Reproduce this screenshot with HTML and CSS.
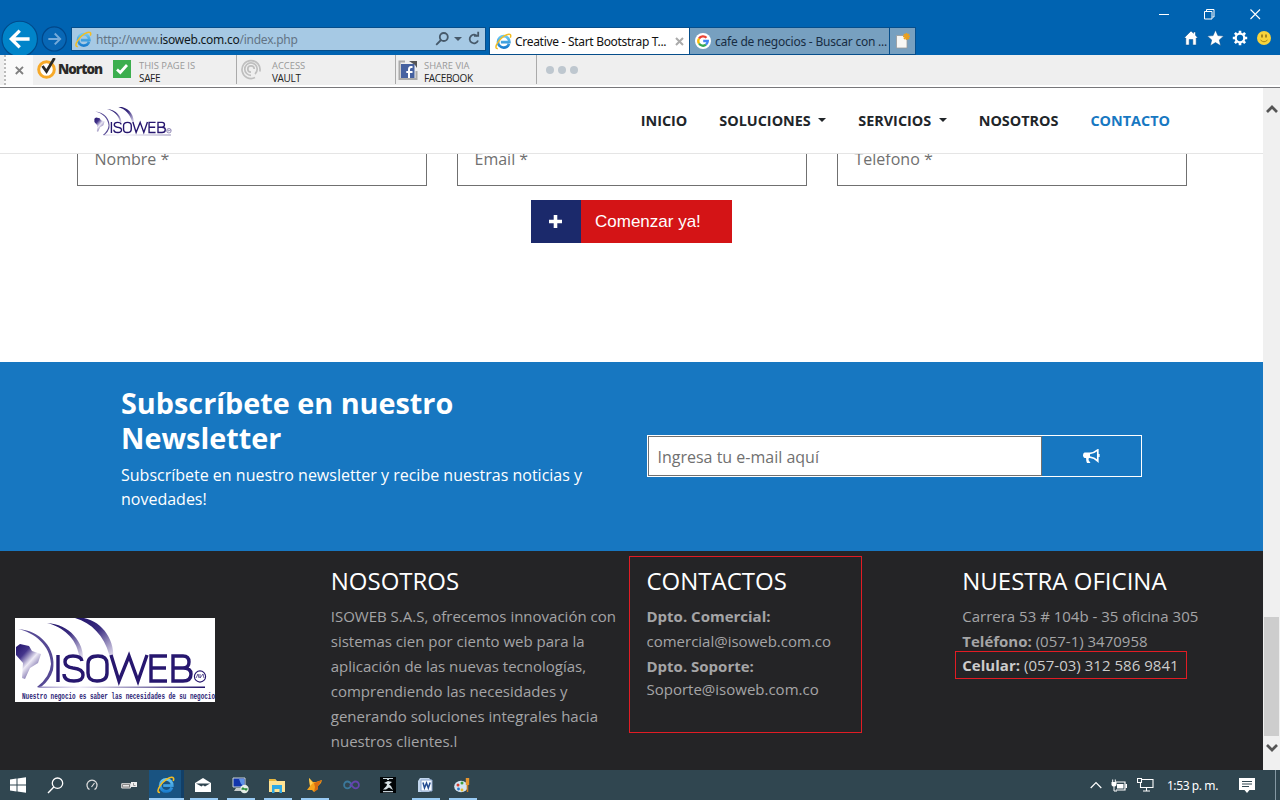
FILE: index.html
```html
<!DOCTYPE html>
<html lang="es">
<head>
<meta charset="utf-8">
<title>Creative - Start Bootstrap Theme</title>
<link rel="stylesheet" href="styles.css">
</head>
<body>
<svg width="0" height="0" class="defs" aria-hidden="true">
  <defs>
    <linearGradient id="ieblue" x1="0" y1="0" x2="0" y2="1"><stop offset="0" stop-color="#6cc8f2"/><stop offset="1" stop-color="#1b7fd0"/></linearGradient>
    <linearGradient id="arc" x1="0" y1="0" x2=".9" y2="1"><stop offset="0" stop-color="#201268"/><stop offset=".45" stop-color="#3a2c80"/><stop offset="1" stop-color="#eeeaf6"/></linearGradient>
    <linearGradient id="land" x1="0" y1="0" x2=".8" y2="1"><stop offset="0" stop-color="#20106a"/><stop offset=".32" stop-color="#44358b"/><stop offset=".58" stop-color="#eeebf6"/><stop offset="1" stop-color="#30207a"/></linearGradient>
    <linearGradient id="rule" x1="0" y1="0" x2="1" y2="0"><stop offset="0" stop-color="#9a92c4"/><stop offset=".25" stop-color="#f0edf8"/><stop offset="1" stop-color="#201268"/></linearGradient>
    <symbol id="ie" viewBox="0 0 18 18">
      <path d="M14.8 11.5C13.9 14 11.8 15.4 9.2 15.4A6 6 0 1 1 15.2 9.6H6.2" fill="none" stroke="url(#ieblue)" stroke-width="2.9"/>
      <path d="M3 16.3C.2 17 .4 13.6 3.2 9.6C6.8 4.3 13.2.2 15.8 1.5C17 2.1 16.7 3.8 16.2 5" fill="none" stroke="#f3bd23" stroke-width="1.6"/>
    </symbol>
    <symbol id="isoweb" viewBox="0 0 200 84">
      <path d="M3 11C24 12 42 30 38 52Q35 62 26 69H22Q35 59 36 46C35 27 20 15 3 11Z" fill="#564994"/>
      <path d="M32 5C54 6 70 24 68 44L64 37C61 20 48 9 32 5Z" fill="url(#arc)"/>
      <path d="M60 0H69C88 4 101 23 98 44L94 36C89 18 77 5 60 0Z" fill="url(#arc)"/>
      <path d="M1 29L5 26L14 28L17 33L26 36L23 45L15 50L10 61L7 60L8 45L1 37Z" fill="url(#land)"/>
      <path d="M25 68.5H190V70H22Z" fill="url(#rule)"/>
      <g fill="none" stroke="#27176f" stroke-width="3.4">
        <path d="M43 37V64M67 43Q66 38 58 38Q50 38 50 44Q50 49 58 50Q68 51 68 57Q68 63 59 63Q49 63 49 56M83 38Q73 38 73 46V55Q73 63 82 63Q92 63 92 55V46Q92 38 83 38ZM96 37L104 63L114 38L123 63L132 37M152 38H136V63H152M136 50H151M158 38V63H168Q176 63 176 56Q176 50 168 50Q174 50 174 44Q174 38 168 38ZM158 50H169"/>
        <circle cx="185" cy="58.5" r="5.6" stroke-width="1.1"/>
        <path d="M181 60L183 56L184 60M185 56V60L188 56L189 60" stroke-width=".7"/>
      </g>
    </symbol>
  </defs>
</svg>

<div class="titlebar">
  <div class="window-controls">
    <svg width="10" height="12" viewBox="0 0 10 12"><path d="M0 6.5H10" stroke="#fff"/></svg>
    <svg width="11" height="12" viewBox="0 0 11 12"><path d="M.5 3.5H8V11H.5ZM2.5 3V1.5H10V9H8.5" fill="none" stroke="#fff"/></svg>
    <svg width="11" height="12" viewBox="0 0 11 12"><path d="M.5 1.5L10 11M10 1.5L.5 11" stroke="#fff" stroke-width="1.1"/></svg>
  </div>
  <div class="browser-nav">
    <svg class="history" width="72" height="35" viewBox="0 0 72 35">
      <circle cx="20" cy="19" r="18" fill="#0084c9" stroke="#004b8b" stroke-width="1.2"/>
      <path d="M30 19H12M20 10.5L11.5 19L20 27.5" fill="none" stroke="#fff" stroke-width="3.4"/>
      <circle cx="55" cy="19" r="12.2" fill="#0867b5" stroke="#00478a" stroke-width="1.2"/>
      <path d="M49 19H61M55.5 13.5L61 19L55.5 24.5" fill="none" stroke="#75aada" stroke-width="2"/>
    </svg>
    <div class="address">
      <svg width="17" height="17"><use href="#ie"/></svg>
      <span class="url">http://www.<b>isoweb.com.co</b>/index.php</span>
      <svg class="address-tools" width="46" height="16" viewBox="0 0 46 16">
        <g fill="none" stroke="#46596a" stroke-width="1.8"><circle cx="8.8" cy="6" r="4"/><path d="M6 9L1.2 13.8"/><path d="M42.5 5.5A4.3 4.3 0 1 0 43 9.5M39 4.8H43.2V.8"/></g>
        <path d="M19 6H27L23 10Z" fill="#46596a"/>
      </svg>
    </div>
    <div class="tabs">
      <div class="tab active">
        <svg width="17" height="17"><use href="#ie"/></svg><span>Creative - Start Bootstrap T...</span>
        <svg class="close" width="9" height="9" viewBox="0 0 9 9"><path d="M1 1L8 8M8 1L1 8" stroke="#aaa" stroke-width="2"/></svg>
      </div>
      <div class="tab">
        <svg width="16" height="16" viewBox="0 0 16 16"><circle cx="8" cy="8" r="8" fill="#fff"/><g fill="none" stroke-width="2.3"><path d="M4 5.5A4.8 4.8 0 0 1 11.5 4.8" stroke="#ea4335"/><path d="M4 5.5A4.8 4.8 0 0 0 4 10.5" stroke="#fbbc05"/><path d="M4 10.5A4.8 4.8 0 0 0 11 11.7" stroke="#34a853"/><path d="M11 11.7Q12.8 10 12.8 8H8.2" stroke="#4285f4"/></g></svg>
        <span class="dim">cafe de negocios - Buscar con ...</span>
      </div>
      <div class="tab new"><svg width="15" height="16" viewBox="0 0 15 16"><path d="M.5 2.5H11V15H.5Z" fill="#f7f7f5" stroke="#999" stroke-width=".8"/><path d="M10.5 0V7M7 3.5H14M8 1L13 6M13 1L8 6" stroke="#eba01c" stroke-width="1.7"/></svg></div>
    </div>
    <svg class="commands" width="90" height="20" viewBox="0 0 90 20">
      <g stroke="#004b8b" stroke-width=".5" fill="#fff"><path d="M1 10L8 3L10.5 5.3V4H12.5V7.3L15 10H13.2V17H9.8V11.5H6.2V17H2.8V10Z"/><path d="M32.5 2L34.9 7.6L40.7 8.1L36.3 11.9L37.7 17.7L32.5 14.6L27.3 17.7L28.7 11.9L24.3 8.1L30.1 7.6Z"/></g>
      <circle cx="57" cy="10" r="4.3" fill="none" stroke="#fff" stroke-width="2.3"/>
      <path d="M57 2.8V5M57 15V17.2M49.8 10H52M62 10H64.2M51.9 4.9L53.5 6.5M60.5 13.5L62.1 15.1M62.1 4.9L60.5 6.5M53.5 13.5L51.9 15.1" stroke="#fff" stroke-width="2.6"/>
      <circle cx="81" cy="10" r="7" fill="#f8d33b"/><path d="M79 6.5V9.5M83 6.5V9.5" stroke="#866c18" stroke-width="1.5"/><path d="M77.5 12Q81 15.5 84.5 12" fill="none" stroke="#a88619"/>
    </svg>
  </div>
</div>

<div class="norton-bar">
  <div class="bar-close"><svg width="9" height="9" viewBox="0 0 9 9"><path d="M.8.8L8 8M8 .8L.8 8" stroke="#808080" stroke-width="1.9"/></svg></div>
  <div class="norton">
    <svg width="21" height="22" viewBox="0 0 21 22"><circle cx="9.5" cy="11.5" r="7.8" fill="#fff" stroke="#f7a928" stroke-width="3"/><path d="M5.5 8L9.5 13.5L17.5 0" fill="none" stroke="#2c2a28" stroke-width="2.8"/></svg>
    <b>Norton</b>
  </div>
  <div class="bar-item safe">
    <svg width="18" height="18" viewBox="0 0 18 18"><path d="M0 0H18V18H0Z" fill="#3cae4e"/><path d="M4 9.5L7.3 12.5L14 5" fill="none" stroke="#fff" stroke-width="2.7"/></svg>
    <p>THIS PAGE IS<br><em>SAFE</em></p>
  </div>
  <div class="bar-item vault">
    <svg width="21" height="21" viewBox="0 0 21 21"><g fill="none" stroke="#bfbfbf" stroke-width="1.7"><path d="M14 18.6A9 9 0 1 1 18.8 12.5"/><path d="M10 16.3A6.2 6.2 0 1 1 16.2 10Q16.2 13 14 15"/><path d="M10 13.2A3.2 3.2 0 1 1 13.2 10"/></g></svg>
    <p>ACCESS<br><em>VAULT</em></p>
  </div>
  <div class="bar-item facebook">
    <svg width="20" height="21" viewBox="0 0 20 21"><path d="M7 1.5H1.5V19H18.5V11" fill="none" stroke="#aaa" stroke-width="2"/><path d="M11 1H19V8L17 5L14 3Z" fill="#555"/><path d="M3 4H16.5V18H3Z" fill="#4561a0"/><path d="M14.5 7H13Q11 7 11 9.5V18M8.3 12H14.5" fill="none" stroke="#fff" stroke-width="2"/></svg>
    <p>SHARE VIA<br><em>FACEBOOK</em></p>
  </div>
  <div class="dots"><i></i><i></i><i></i></div>
</div>

<div class="viewport">
  <main class="page">
    <header class="site-header">
      <svg class="brand" width="81" height="34" viewBox="0 0 200 84" preserveAspectRatio="none"><use href="#isoweb" width="200" height="84"/></svg>
      <nav>
        <a>INICIO</a><a class="drop">SOLUCIONES</a><a class="drop">SERVICIOS</a><a>NOSOTROS</a><a class="current">CONTACTO</a>
      </nav>
    </header>
    <section class="signup">
      <div class="fields"><div>Nombre *</div><div>Email *</div><div>Telefono *</div></div>
      <div class="cta"><span class="plus"><svg width="13" height="13" viewBox="0 0 13 13"><path d="M6.5 0V13M0 6.5H13" stroke="#fff" stroke-width="3.6"/></svg></span><span class="cta-label">Comenzar ya!</span></div>
    </section>
    <section class="newsletter">
      <div class="intro"><h2>Subscríbete en nuestro Newsletter</h2><p>Subscríbete en nuestro newsletter y recibe nuestras noticias y novedades!</p></div>
      <div class="subscribe"><div class="email">Ingresa tu e-mail aquí</div><div class="send">
        <svg width="17" height="15" viewBox="0 0 17 15"><path d="M1.5 3.5H7V9H1.5Q0 8.5 0 6.3T1.5 3.5Z" fill="#fff"/><path d="M3 8H6L5.5 11L7.5 14H4Q3 12 3 8Z" fill="#fff"/><path d="M7 4.4Q11 4 14.8 .9V12Q11 8.5 7 8.2" fill="none" stroke="#fff" stroke-width="1.7"/><path d="M15.9 5V8" stroke="#fff" stroke-width="1.5"/></svg>
      </div></div>
    </section>
    <footer class="footer">
      <div class="foot-logo"><svg width="200" height="84" viewBox="0 0 200 84"><path d="M0 0H200V84H0Z" fill="#fff"/><use href="#isoweb" width="200" height="84"/><text x="7" y="81" textLength="193" lengthAdjust="spacingAndGlyphs" class="slogan">Nuestro negocio es saber las necesidades de su negocio</text></svg></div>
      <div><h3>NOSOTROS</h3><p>ISOWEB S.A.S, ofrecemos innovación con sistemas cien por ciento web para la aplicación de las nuevas tecnologías, comprendiendo las necesidades y generando soluciones integrales hacia nuestros clientes.l</p></div>
      <div><h3>CONTACTOS</h3><p><b>Dpto. Comercial:</b><br>comercial@isoweb.com.co<br><b>Dpto. Soporte:</b></p><p class="support">Soporte@isoweb.com.co</p><span class="mark contacts-mark"></span></div>
      <div><h3>NUESTRA OFICINA</h3><p>Carrera 53 # 104b - 35 oficina 305<br><b>Teléfono:</b> (057-1) 3470958</p><p class="cell"><b>Celular:</b> (057-03) 312 586 9841</p><span class="mark cell-mark"></span></div>
    </footer>
  </main>
  <div class="scrollbar">
    <svg width="12" height="10" viewBox="0 0 12 10"><path d="M1 8L6 3L11 8" fill="none" stroke="#555" stroke-width="2.7"/></svg>
    <i></i>
    <svg width="12" height="10" viewBox="0 0 12 10"><path d="M1 2L6 7L11 2" fill="none" stroke="#555" stroke-width="2.7"/></svg>
  </div>
</div>

<div class="taskbar">
  <div class="task"><svg width="18" height="16" viewBox="0 0 18 16"><path d="M1 2.5L7.5 1.6V7.5H1ZM8.5 1.5L17 .3V7.5H8.5ZM1 8.5H7.5V14.4L1 13.5ZM8.5 8.5H17V15.7L8.5 14.5Z" fill="#fff"/></svg></div>
  <div class="task"><svg width="17" height="17" viewBox="0 0 17 17"><circle cx="10.5" cy="6.2" r="5.2" fill="none" stroke="#fff" stroke-width="1.3"/><path d="M6.8 10L1 16" stroke="#fff" stroke-width="1.4"/></svg></div>
  <div class="task"><svg width="12" height="12" viewBox="0 0 12 12"><path d="M3.5 10.5A5 5 0 1 1 8.5 10.5M5.5 8L8.5 4" fill="none" stroke="#ddd" stroke-width="1.2"/></svg></div>
  <div class="task"><svg width="17" height="9" viewBox="0 0 17 9"><path d="M.7 2.7H9.5V7H.7Z" fill="#777" stroke="#ddd"/><path d="M2 4.8H8" stroke="#eee" stroke-width="1.5"/><path d="M10 1H16V6H10Z" fill="#eee"/><path d="M12.5 2V4.5H14.5" stroke="#999" fill="none"/></svg></div>
  <div class="task open focused"><svg width="18" height="18"><use href="#ie"/></svg></div>
  <div class="task open"><svg width="16" height="14" viewBox="0 0 16 14"><path d="M0 5L8 0L16 5V14H0Z" fill="#fff"/><path d="M1 5.5H15L10 8.5L8 7.3L6.5 8.5Z" fill="#304551"/></svg></div>
  <div class="task open"><svg width="17" height="17" viewBox="0 0 17 17"><path d="M1 1H13V10H1Z" fill="#1235ac" stroke="#c9d4d7"/><path d="M7 2H12V9L9 7Z" fill="#5d91e6"/><path d="M4 11H10V14H2Z" fill="#c5cbcb"/><circle cx="12.5" cy="12" r="4.2" fill="#e5ede6"/><path d="M9.5 12H12L10.5 10.5M15.5 12H13L14.5 13.5" stroke="#268b38" stroke-width="1.3" fill="none"/></svg></div>
  <div class="task open"><svg width="18" height="15" viewBox="0 0 18 15"><path d="M1 1H7L9 3H17V14H1Z" fill="#ffe394"/><path d="M1 1H7L8 3H1Z" fill="#e8b63b"/><path d="M4 7H14V15H11.5V11H6.5V15H4Z" fill="#2fa9e5"/></svg></div>
  <div class="task open"><svg width="17" height="17" viewBox="0 0 17 17"><path d="M3 1L7 5L10 5L16 3L15 6L12 9L12 12L8 15L6 13L1 13L4 9Z" fill="#f6a51c"/><path d="M8 6L16 3L12 9V12L8 15L9 10Z" fill="#d86b12"/><path d="M3 1L7 6L4 9Z" fill="#ffd257"/></svg></div>
  <div class="task"><svg width="17" height="10" viewBox="0 0 17 10"><path d="M9 5Q6.8 1.5 4.5 1.5A3.3 3.3 0 0 0 4.5 8.3Q6.8 8.3 9 5" fill="none" stroke="#3b789b" stroke-width="1.8"/><path d="M7 6Q10 1.5 12.5 1.5A3.3 3.3 0 0 1 12.5 8.3Q10.5 8.3 8 4.5" fill="none" stroke="#6544ae" stroke-width="1.8"/></svg></div>
  <div class="task"><svg width="16" height="16" viewBox="0 0 16 16"><path d="M0 0H16V16H0Z" fill="#020507"/><path d="M3 1H13V2H9V3H7V2H3ZM3 14H13V15.2H3Z" fill="#c4d0d6"/><path d="M4 6L8 4L12 5L9 7.5L11 9L13 13L9 10.5L6 12.5H3L6.5 9L7 7Z" fill="#d8e1e5"/></svg></div>
  <div class="task open"><svg width="16" height="16" viewBox="0 0 16 16"><path d="M1 4L3 1H12L14 3V13L12 15H1Z" fill="#c1d6ed"/><path d="M4 3H15V14H4Z" fill="#f7fbff" stroke="#8fa8d0"/><path d="M6 5.5L7.5 11L9.5 6L11.3 11L13.2 5.5" fill="none" stroke="#234b91" stroke-width="1.5"/></svg></div>
  <div class="task open"><svg width="17" height="17" viewBox="0 0 17 17"><ellipse cx="7" cy="9.5" rx="6.8" ry="5.8" fill="#d4e4f2"/><circle cx="4" cy="8" r="1.5" fill="#d43d2e"/><circle cx="8" cy="6" r="1.5" fill="#409e37"/><circle cx="4.5" cy="12" r="1.4" fill="#2779ca"/><circle cx="8" cy="13" r="1.4" fill="#e7b72b"/><path d="M13.5 1V8" stroke="#e5962e" stroke-width="3.4"/><path d="M13.5 8V15" stroke="#c67922" stroke-width="1.6"/></svg></div>
  <div class="tray">
    <svg width="12" height="8" viewBox="0 0 12 8"><path d="M.7 7L6 1.5L11.3 7" fill="none" stroke="#fff" stroke-width="1.2"/></svg>
    <svg width="17" height="13" viewBox="0 0 17 13"><path d="M5 3H14V11H5" fill="none" stroke="#fff" stroke-width="1.2"/><path d="M6 5H12.5V9.5H6ZM14.5 5H16V9H14.5ZM.5 3H5.5V6Q5 7.5 3 7.5T.5 6Z" fill="#fff"/><path d="M1.7.5V3M4.3.5V3M3 7V12H6" fill="none" stroke="#fff" stroke-width="1"/></svg>
    <svg width="17" height="14" viewBox="0 0 17 14"><path d="M5 1.5H16V9.5H3.5V5M9.5 10V13M6 13H13M.5 .5H4.5V4.5H.5Z" fill="none" stroke="#fff" stroke-width="1.1"/></svg>
    <span>1:53 p. m.</span>
    <svg width="16" height="17" viewBox="0 0 16 17"><path d="M0 1H16V13H10.5L8 16L5.5 13H0Z" fill="#fff"/><path d="M3 4.5H13M3 7H13M3 9.5H10" stroke="#334953"/></svg>
  </div>
</div>
</body>
</html>
```

FILE: styles.css
```css
* { box-sizing: border-box; }
body { margin: 0; width: 1280px; height: 800px; overflow: hidden; font-family: "Open Sans", "Noto Sans", sans-serif; display: flex; flex-direction: column; background: #fff; }
svg { display: block; flex: none; }
p, h2, h3 { margin: 0; }
.defs { position: absolute; }
.titlebar { height: 55px; flex: none; background: #0063b1; overflow: hidden; }
.window-controls { height: 20px; display: flex; justify-content: flex-end; gap: 35px; padding: 8px 19px 0 0; }
.browser-nav { height: 35px; display: flex; }
.history { width: 71px; }
.address { width: 415px; height: 24px; margin-top: 7px; border: 1px solid #064e8b; background: #a6c9e4; display: flex; align-items: center; padding: 0 4px 0 3px; font: 12px "Noto Sans", sans-serif; color: #637485; }
.url { margin-left: 4px; letter-spacing: -.26px; white-space: nowrap; }
.url b { font-weight: 400; color: #101820; }
.address-tools { margin-left: auto; }
.tabs { display: flex; margin: 7px 0 0 3px; height: 28px; }
.tab { width: 200px; border: 1px solid #064e8b; background: #77a0c0; display: flex; align-items: center; padding-left: 5px; gap: 4px; font: 12px "Noto Sans", sans-serif; white-space: nowrap; color: #111; letter-spacing: -.3px; }
.tab.active { background: #fff; width: 201px; gap: 3px; }
.tab + .tab { border-left: 0; }
.tab .dim { color: #172d43; letter-spacing: -.22px; }
.tab.new { width: 26px; padding-left: 6px; }
.close { margin-left: auto; margin-right: 5px; }
.commands { margin: 8px 7px 0 auto; }
.norton-bar { height: 33px; flex: none; display: flex; background: #efefef; border-bottom: 1px solid #77777a; box-shadow: inset 0 -2px #fff; }
.bar-close { height: 30px; background: #fafafa; border-left: 2px dotted #bbb; margin-left: 4px; width: 29px; display: flex; align-items: center; padding-left: 9px; }
.norton { width: 80px; display: flex; padding: 3px 0 0 4px; }
.norton b { font: 800 13.5px "Open Sans", sans-serif; color: #2c2a28; letter-spacing: -1px; margin: 2px 0 0 0; }
.bar-item { display: flex; height: 29px; gap: 7px; border-right: 1px solid #aaa; }
.bar-item p { font: 9.4px/13px "Open Sans", sans-serif; color: #999; padding-top: 4px; white-space: nowrap; }
.bar-item em { color: #222; font-style: normal; font-size: 10px; letter-spacing: -.35px; }
.safe { width: 124px; }
.safe svg { margin: 5px 1px 0 0; }
.vault { width: 159px; padding-left: 4px; gap: 10px; }
.vault svg { margin-top: 4px; }
.facebook { width: 141px; padding-left: 2px; gap: 6px; }
.facebook svg { margin-top: 5px; }
.dots { display: flex; gap: 4px; padding: 11px 9px; }
.dots i { width: 8px; height: 8px; border-radius: 50%; background: #bec7cf; }
.viewport { flex: none; height: 682px; display: flex; }
.page { width: 1263px; display: flex; flex-direction: column; }
.site-header { height: 66px; flex: none; border-bottom: 1px solid #e5e5e5; background: #fff; position: relative; z-index: 1; display: flex; justify-content: space-between; padding: 0 93px; }
.brand { margin: 19px 0 0 1px; }
nav { display: flex; gap: 32px; align-items: center; font-size: 14.4px; font-weight: 700; color: #212529; }
.current { color: #1778c2; }
.drop::after { content: ""; display: inline-block; border: 4.3px solid transparent; border-top-color: #212529; border-bottom: 0; margin-left: 7.5px; vertical-align: 3.7px; }
.signup { height: 208px; flex: none; }
.fields { display: flex; gap: 30px; padding-left: 77px; margin-top: -20px; }
.fields div { width: 350px; height: 52px; border: 1px solid #707070; padding-left: 16.5px; font-size: 16px; line-height: 49px; color: #707070; }
.cta { width: 201px; height: 43px; margin: 14px 0 0 531px; display: flex; align-items: center; background: #d41416; color: #fff; }
.plus { width: 50px; height: 43px; background: #1b296b; display: grid; place-items: center; padding-right: 1px; }
.cta-label { margin-left: 14px; font: 17px "Liberation Sans", Arial, sans-serif; }
.newsletter { height: 189px; flex: none; background: #1777c1; color: #fff; display: flex; padding: 23px 0 0 121px; }
.intro { width: 526px; font-size: 16px; line-height: 24px; }
.intro h2 { width: 400px; font-size: 28.8px; line-height: 35px; margin-bottom: 8px; }
.intro p { width: 475px; }
.subscribe { width: 495px; height: 42px; margin-top: 50px; border: 1px solid #fff; display: flex; }
.email { width: 394px; border: 1px solid #707070; background: #fff; color: #707070; font-size: 16px; line-height: 40px; padding-left: 8.5px; }
.send { flex: 1; display: grid; place-items: center; }
.footer { height: 219px; flex: none; background: #242426; color: #a5a5a6; display: grid; grid-template-columns: repeat(4, 1fr); }
.footer > div { position: relative; padding: 15px 0 0 15px; }
.footer > .foot-logo { padding-top: 67px; }
.slogan { font: bold 9px "Liberation Mono", monospace; fill: #2b1d75; }
.footer h3 { font-size: 24px; line-height: 30px; font-weight: 400; color: #fff; margin-bottom: 8px; }
.footer p { font-size: 15px; line-height: 25px; white-space: nowrap; }
.footer > div:nth-child(2) p { white-space: normal; width: 290px; }
.footer p.support { margin-top: -2px; }
.footer p.cell { margin-top: -1px; color: #ccc; letter-spacing: .03px; }
.mark { position: absolute; border: 1px solid #e11c24; }
.contacts-mark { left: -3px; top: 5px; width: 233px; height: 177px; }
.cell-mark { left: 8px; top: 100px; width: 232px; height: 28px; }
.scrollbar { width: 17px; background: #f0f0f0; display: flex; flex-direction: column; align-items: center; padding: 16px 0 17px; }
.scrollbar i { width: 15px; height: 119px; background: #cdcdcd; margin-top: auto; margin-bottom: 7px; }
.taskbar { height: 30px; flex: none; background: #304650; display: flex; }
.task { width: 37px; display: grid; place-items: center; position: relative; padding-right: 1px; }
.task.open::after { content: ""; position: absolute; left: 5px; right: 4px; bottom: 0; height: 2px; background: #99cbf4; }
.task.focused { background: linear-gradient(90deg, transparent 1px, #195381 1px 33px, #123f67 33px 36px, transparent 36px); }
.task.focused::after { left: 1px; right: 1px; }
.tray { margin-left: auto; display: flex; align-items: center; gap: 9px; border-right: 1px solid #8598a3; margin-right: 4px; padding-right: 20px; }
.tray span { color: #fff; font: 12px "Noto Sans", sans-serif; letter-spacing: -.4px; margin-left: 4px; }
.tray svg:last-child { margin-left: 12px; }
```
